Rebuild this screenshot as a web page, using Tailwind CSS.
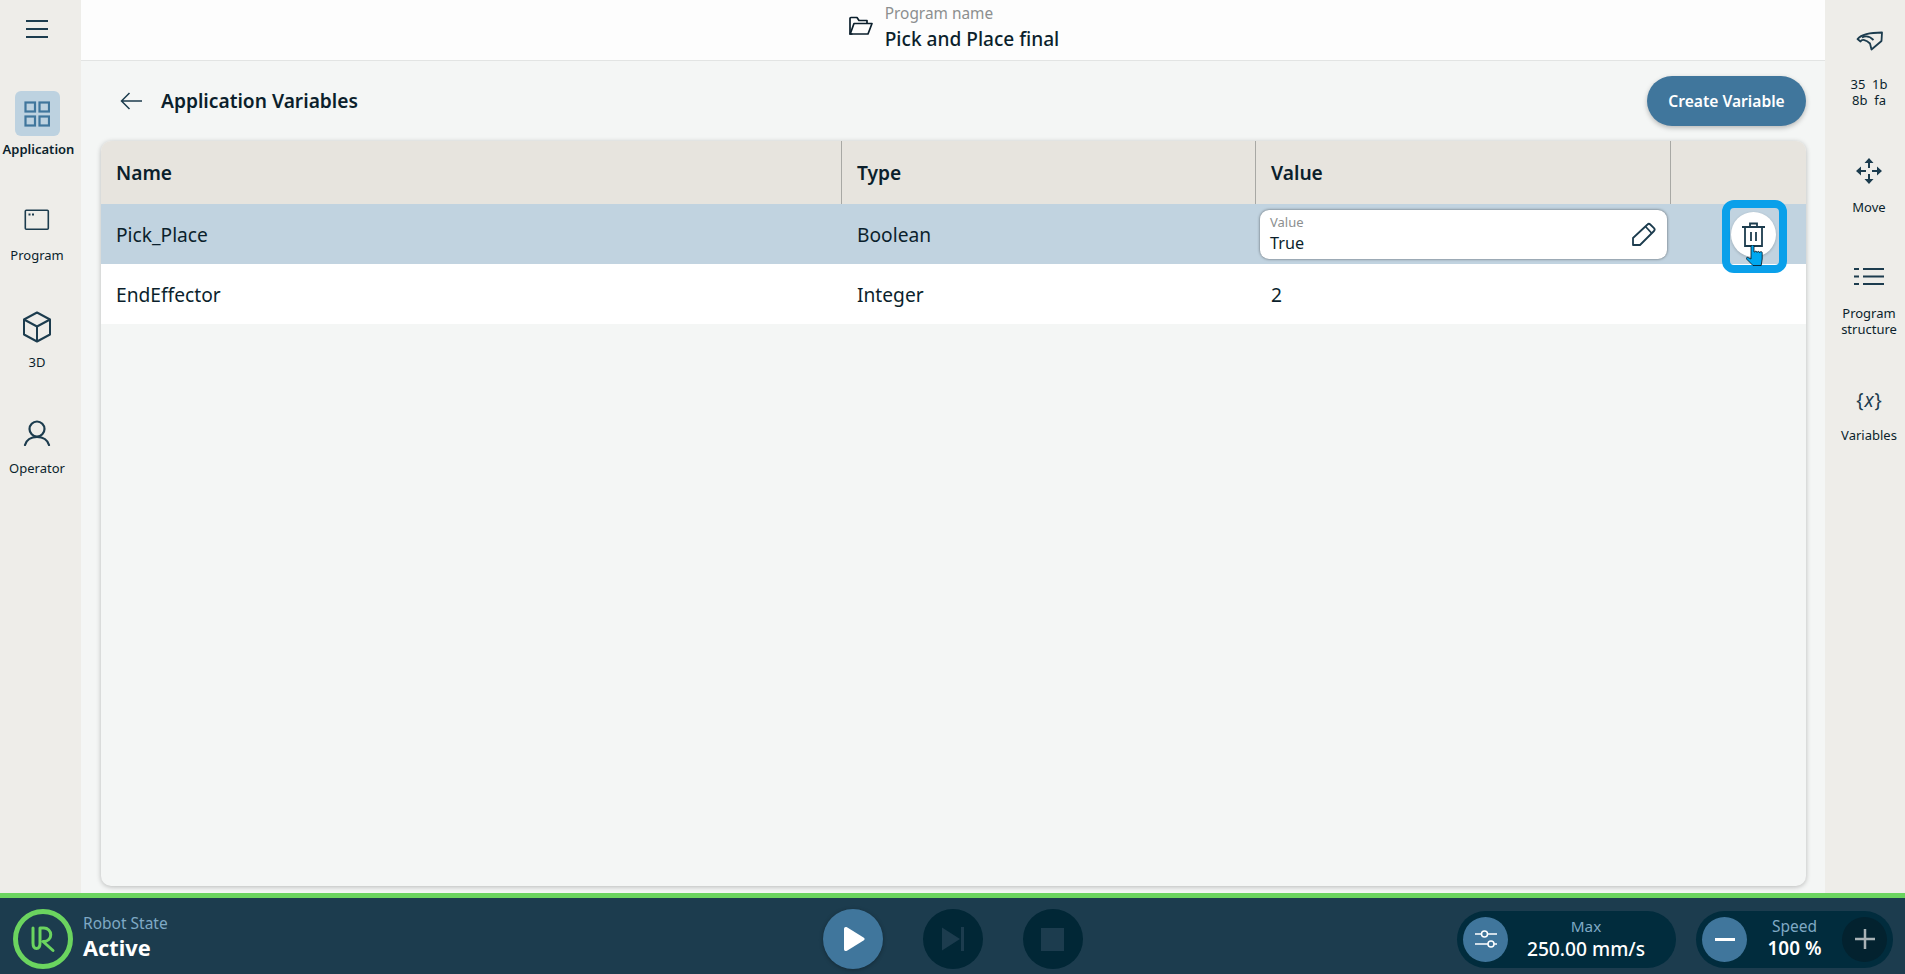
<!DOCTYPE html>
<html lang="en">
<head>
    <meta charset="UTF-8">
    <title>Application Variables</title>
    <meta name="viewport" content="width=device-width, initial-scale=1.0">
    <script src="https://cdn.jsdelivr.net/npm/@tailwindcss/browser@4"></script>
</head>
<body class="w-[1905px] h-[974px] overflow-hidden flex flex-col font-['Noto_Sans',sans-serif] text-[#0b1f2c] bg-[#f4f6f5]">

<div class="flex h-[893px]">
    <!-- left rail -->
    <nav class="w-[81px] shrink-0 bg-[#eeede9] flex flex-col items-center pr-[7px]">
        <div class="h-[91px] w-full flex justify-center pt-[20px]">
            <svg width="22" height="18" viewBox="0 0 22 18" fill="none" stroke="#1c3c4e" stroke-width="1.8"><path d="M0 1h22M0 9h22M0 17h22"/></svg>
        </div>
        <div class="h-[106.5px] w-full flex flex-col items-center">
            <div class="w-[45px] h-[45px] rounded-md bg-[#bdd2e0] flex items-center justify-center">
                <svg width="26" height="26" viewBox="0 0 26 26" fill="none" stroke="#40769c" stroke-width="2.2"><rect x="1.5" y="1.5" width="9.5" height="9" /><rect x="15.5" y="1.5" width="9.5" height="9"/><rect x="1.5" y="15.5" width="9.5" height="9"/><rect x="15.5" y="15.5" width="9.5" height="9"/></svg>
            </div>
            <span class="mt-[3px] ml-[3px] text-[13px] leading-[20px] font-semibold whitespace-nowrap">Application</span>
        </div>
        <div class="h-[106.5px] w-full flex flex-col items-center">
            <div class="h-[45px] flex items-center">
                <svg width="26" height="22" viewBox="0 0 26 22" fill="none" stroke="#1c3c4e" stroke-width="1.6"><rect x="1.3" y="1.3" width="23" height="19" rx="1"/><path d="M4.5 5.5h2M8 5.5h2" stroke-width="2"/></svg>
            </div>
            <span class="mt-[3px] text-[13px] leading-[18px]">Program</span>
        </div>
        <div class="h-[106.5px] w-full flex flex-col items-center">
            <div class="h-[45px] flex items-center">
                <svg width="30" height="32" viewBox="0 0 30 32" fill="none" stroke="#1c3c4e" stroke-width="2" stroke-linejoin="round"><path d="M15 1.5 28 8.5V23.5L15 30.5 2 23.5V8.5Z"/><path d="M2 8.5 15 15.5 28 8.5M15 15.5V30.5"/></svg>
            </div>
            <span class="mt-[4px] text-[13px] leading-[18px]">3D</span>
        </div>
        <div class="h-[106.5px] w-full flex flex-col items-center">
            <div class="h-[45px] flex items-center">
                <svg width="28" height="26" viewBox="0 0 28 26" fill="none" stroke="#1c3c4e" stroke-width="2.2" stroke-linecap="round"><circle cx="14" cy="9" r="7.5"/><path d="M2 25c1.5-5 6-8 12-8s10.500 3 12 8"/></svg>
            </div>
            <span class="mt-[3px] text-[13px] leading-[18px]">Operator</span>
        </div>
    </nav>

    <!-- center -->
    <main class="flex-1 flex flex-col min-w-0">
        <header class="h-[61px] shrink-0 bg-[#fdfdfd] border-b border-[#e2e4e3] flex justify-center pl-[2px]">
            <div class="flex items-center gap-[12px]">
                <svg width="24" height="20" viewBox="0 0 24 20" fill="none" stroke="#0b1f2c" stroke-width="1.7" stroke-linejoin="round" class="mt-[-9px]"><path d="M3.500 18H1V2.500A1 1 0 0 1 2 1.500h6l2 3h8v3"/><path d="M1.200 18 5 7.500h18L19 18H3.500Z"/></svg>
                <div class="flex flex-col mt-[-2px]">
                    <span class="text-[15.400px] leading-[20px] text-[#8c8f8f]">Program name</span>
                    <span class="text-[19.100px] leading-[30px] font-medium text-[#0b1f2c]">Pick and Place final</span>
                </div>
            </div>
        </header>

        <div class="h-[80px] shrink-0 flex items-center justify-between pl-[39px] pr-[19px] pt-[9px] pb-[10px]">
            <div class="flex items-center gap-[19px]">
                <svg width="22" height="18" viewBox="0 0 22 18" fill="none" stroke="#1c3c4e" stroke-width="1.5"><path d="M22 9H1.500M9.500 1 1.500 9l8 8"/></svg>
                <h1 class="text-[19.200px] font-semibold leading-[24px]">Application Variables</h1>
            </div>
            <button class="w-[159px] h-[50px] rounded-full bg-[#40769c] text-white text-[15.600px] font-semibold pt-[2px] shadow-[0_2px_5px_rgba(0,0,0,0.25)]">Create Variable</button>
        </div>

        <!-- table card -->
        <section class="ml-[20px] mr-[19px] h-[745px] rounded-[10px] bg-[#f4f6f5] shadow-[0_1px_5px_rgba(0,0,0,0.25)] overflow-hidden">
            <div class="grid grid-cols-[741px_414px_415px_135px] h-[63px] bg-[#e7e4de] text-[19.200px] font-semibold">
                <div class="pl-[15px] pt-[1px] flex items-center border-r border-[#a8a8a4]">Name</div>
                <div class="pl-[15px] pt-[1px] flex items-center border-r border-[#a8a8a4]">Type</div>
                <div class="pl-[15px] pt-[1px] flex items-center border-r border-[#a8a8a4]">Value</div>
                <div></div>
            </div>
            <div class="grid grid-cols-[741px_414px_415px_135px] h-[60px] bg-[#c1d3e0] text-[19.200px] items-center">
                <div class="pl-[15px] pt-[2px]">Pick_Place</div>
                <div class="pl-[15px] pt-[2px]">Boolean</div>
                <div class="pl-[4px]">
                    <div class="w-[407px] h-[49px] rounded-[9px] bg-white shadow-[0_0_3px_rgba(0,0,0,0.55)] pl-[10px] pr-[10px] flex items-center justify-between">
                        <div class="flex flex-col pt-[2px]">
                            <span class="text-[13px] leading-[16px] text-[#8c8f8f]">Value</span>
                            <span class="text-[16.200px] leading-[26px]">True</span>
                        </div>
                        <svg width="26" height="26" viewBox="0 0 26 26" fill="none" stroke="#1c3c4e" stroke-width="1.8" stroke-linejoin="round"><path d="M2 24V17L16.500 3.500a2 2 0 0 1 2.800 0l3.700 3.700a2 2 0 0 1 0 2.800L9 24Z"/><path d="M14.500 5.500 20.500 12"/></svg>
                    </div>
                </div>
                <div></div>
            </div>
            <div class="grid grid-cols-[741px_414px_415px_135px] h-[60px] bg-white text-[19.200px] items-center">
                <div class="pl-[15px] pt-[2px]">EndEffector</div>
                <div class="pl-[15px] pt-[2px]">Integer</div>
                <div class="pl-[15px] pt-[2px]">2</div>
                <div></div>
            </div>
        </section>
    </main>

    <!-- right rail -->
    <aside class="w-[80px] shrink-0 bg-[#eeede9] flex flex-col items-center text-[13px] leading-[16px] text-center pt-[18px] pl-[8px]">
        <div class="h-[130px] w-full flex flex-col items-center">
            <div class="h-[45px] flex items-center">
                <svg width="27" height="20" viewBox="0 0 27 20" fill="none" stroke="#1c3c4e" stroke-width="1.8" stroke-linejoin="round"><path d="M1.500 8C5 4 12 1.500 26 1.500L25.500 10 15.500 18.500 14 12.500C10 8.500 6 8 4.500 10.500Z"/><path d="M6 6.500C10 4.500 14 5.500 17.500 9"/></svg>
            </div>
            <div class="mt-[13px] whitespace-nowrap">35&nbsp;&nbsp;1b<br>8b&nbsp;&nbsp;fa</div>
        </div>
        <div class="h-[106px] w-full flex flex-col items-center">
            <div class="h-[45px] flex items-center">
                <svg width="26" height="26" viewBox="0 0 26 26" fill="none" stroke="#1c3c4e" stroke-width="2"><path d="M13 4V10M13 16V22M4 13H10M16 13H22"/><path d="M13 0 8.500 5h9ZM13 26 8.500 21h9ZM0 13 5 8.500v9ZM26 13 21 8.500v9Z" fill="#1c3c4e" stroke="none"/></svg>
            </div>
            <div class="mt-[5px] leading-[18px]">Move</div>
        </div>
        <div class="h-[123px] w-full flex flex-col items-center">
            <div class="h-[45px] flex items-center">
                <svg width="30" height="19" viewBox="0 0 30 19" fill="none" stroke="#1c3c4e" stroke-width="2.200"><path d="M0 2h5M9 2h21M0 9.500h5M9 9.500h21M0 17h5M9 17h21"/></svg>
            </div>
            <div class="mt-[6px]">Program<br>structure</div>
        </div>
        <div class="w-full flex flex-col items-center">
            <div class="h-[45px] flex items-center text-[19px] text-[#1c3c4e]">{<span class="italic px-[1px]">x</span>}</div>
            <div class="mt-[4px] leading-[18px]">Variables</div>
        </div>
    </aside>
</div>

<!-- footer bar -->
<footer class="h-[81px] shrink-0 border-t-[5px] border-[#6bd45f] bg-[#1c3c4e] pt-[6px] grid grid-cols-[1fr_auto_1fr] items-center">
    <div class="flex items-center pl-[13px] gap-[10px]">
        <svg width="60" height="60" viewBox="0 0 60 60" fill="none" stroke="#6bd45f"><circle cx="30" cy="30" r="27.500" stroke-width="5"/><path d="M20 19V34C20 38 21.500 39.500 23.500 39.500S27 38 27 34V19H31A6.700 6.700 0 0 1 31 32.500H30L40 41.500" stroke-width="3" stroke-linecap="round" stroke-linejoin="round"/></svg>
        <div class="flex flex-col mt-[-4px]">
            <span class="text-[15.500px] leading-[21px] text-[#7fa9c4]">Robot State</span>
            <span class="text-[21.800px] leading-[28px] font-bold text-white">Active</span>
        </div>
    </div>

    <div class="flex gap-[40px]">
        <div class="w-[60px] h-[60px] rounded-full bg-[#40769c] shadow-[0_1px_4px_rgba(0,0,0,0.3)] flex items-center justify-center">
            <svg width="22" height="26" viewBox="0 0 22 26" fill="white" class="ml-[3px]"><path d="M1 3C1 1 2.500 .5 4 1.300L20.500 11.500C22 12.500 22 13.500 20.500 14.500L4 24.700C2.500 25.500 1 25 1 23Z"/></svg>
        </div>
        <div class="w-[60px] h-[60px] rounded-full bg-[#012736] flex items-center justify-center">
            <svg width="22" height="24" viewBox="0 0 22 24" fill="#1c3c4e"><path d="M0 .5 18 12 0 23.500ZM19 0h3v24h-3Z"/></svg>
        </div>
        <div class="w-[60px] h-[60px] rounded-full bg-[#012736] flex items-center justify-center">
            <div class="w-[23px] h-[23px] bg-[#1c3c4e]"></div>
        </div>
    </div>

    <div class="flex justify-end gap-[20px] pr-[12px]">
        <div class="w-[219px] h-[57px] rounded-full bg-[#012c3d] flex items-center pl-[6px]">
            <div class="w-[45px] h-[45px] rounded-full bg-[#40769c] flex items-center justify-center">
                <svg width="24" height="20" viewBox="0 0 24 20" fill="none" stroke="white" stroke-width="1.500"><path d="M1 5h6M14 5h9M1 15h13M20 15h3"/><circle cx="10.500" cy="5" r="3"/><circle cx="17" cy="15" r="3"/></svg>
            </div>
            <div class="w-[156px] flex flex-col items-center mt-[-2px]">
                <span class="text-[15.300px] leading-[20px] text-[#7fa9c4]">Max</span>
                <span class="text-[19.200px] leading-[25px] font-medium text-white whitespace-nowrap">250.00 mm/s</span>
            </div>
        </div>
        <div class="w-[197px] h-[57px] rounded-full bg-[#012c3d] flex items-center px-[6px]">
            <div class="w-[45px] h-[45px] rounded-full bg-[#40769c] flex items-center justify-center">
                <div class="w-[20px] h-[3px] bg-white"></div>
            </div>
            <div class="w-[95px] flex flex-col items-center mt-[-1px]">
                <span class="text-[15.500px] leading-[20px] text-[#7fa9c4]">Speed</span>
                <span class="text-[18.900px] leading-[25px] font-semibold text-white">100 %</span>
            </div>
            <div class="w-[45px] h-[45px] rounded-full bg-[#03222f] flex items-center justify-center">
                <svg width="20" height="20" viewBox="0 0 20 20" stroke="#a9b2b6" stroke-width="2.500"><path d="M0 10h20M10 0v20"/></svg>
            </div>
        </div>
    </div>
</footer>

<!-- tutorial highlight over the delete button -->
<div class="absolute left-[1722px] top-[200px] w-[65px] h-[73px] rounded-[12px] border-[8px] border-[#0aa0ea]"></div>
<div class="absolute left-[1731px] top-[212px] w-[45px] h-[45px] rounded-full bg-white shadow-[0_1px_3px_rgba(0,0,0,0.2)] flex items-center justify-center">
    <svg width="23" height="25" viewBox="0 0 23 25" fill="none" stroke="#1c3c4e" stroke-width="1.800" class="mt-[-1px]"><path d="M0 5h23M8 5V1.500h7V5M3 5v19h17V5M9 10v9M14 10v9"/></svg>
</div>
<svg class="absolute left-[1746px] top-[245px]" width="17" height="21" viewBox="0 0 17 21" fill="#00a8f0" stroke="#04121a" stroke-width="0.800"><path d="M5 1.500a1.500 1.500 0 0 1 3 0V7h.8a1 1 0 0 1 2 .3h.6a1 1 0 0 1 2 .3h.4a1.200 1.200 0 0 1 2.400.6V14l-1 6.500H7L.5 14c-.6-1 .5-2 1.500-1.500L5 14Z"/></svg>

</body>
</html>
